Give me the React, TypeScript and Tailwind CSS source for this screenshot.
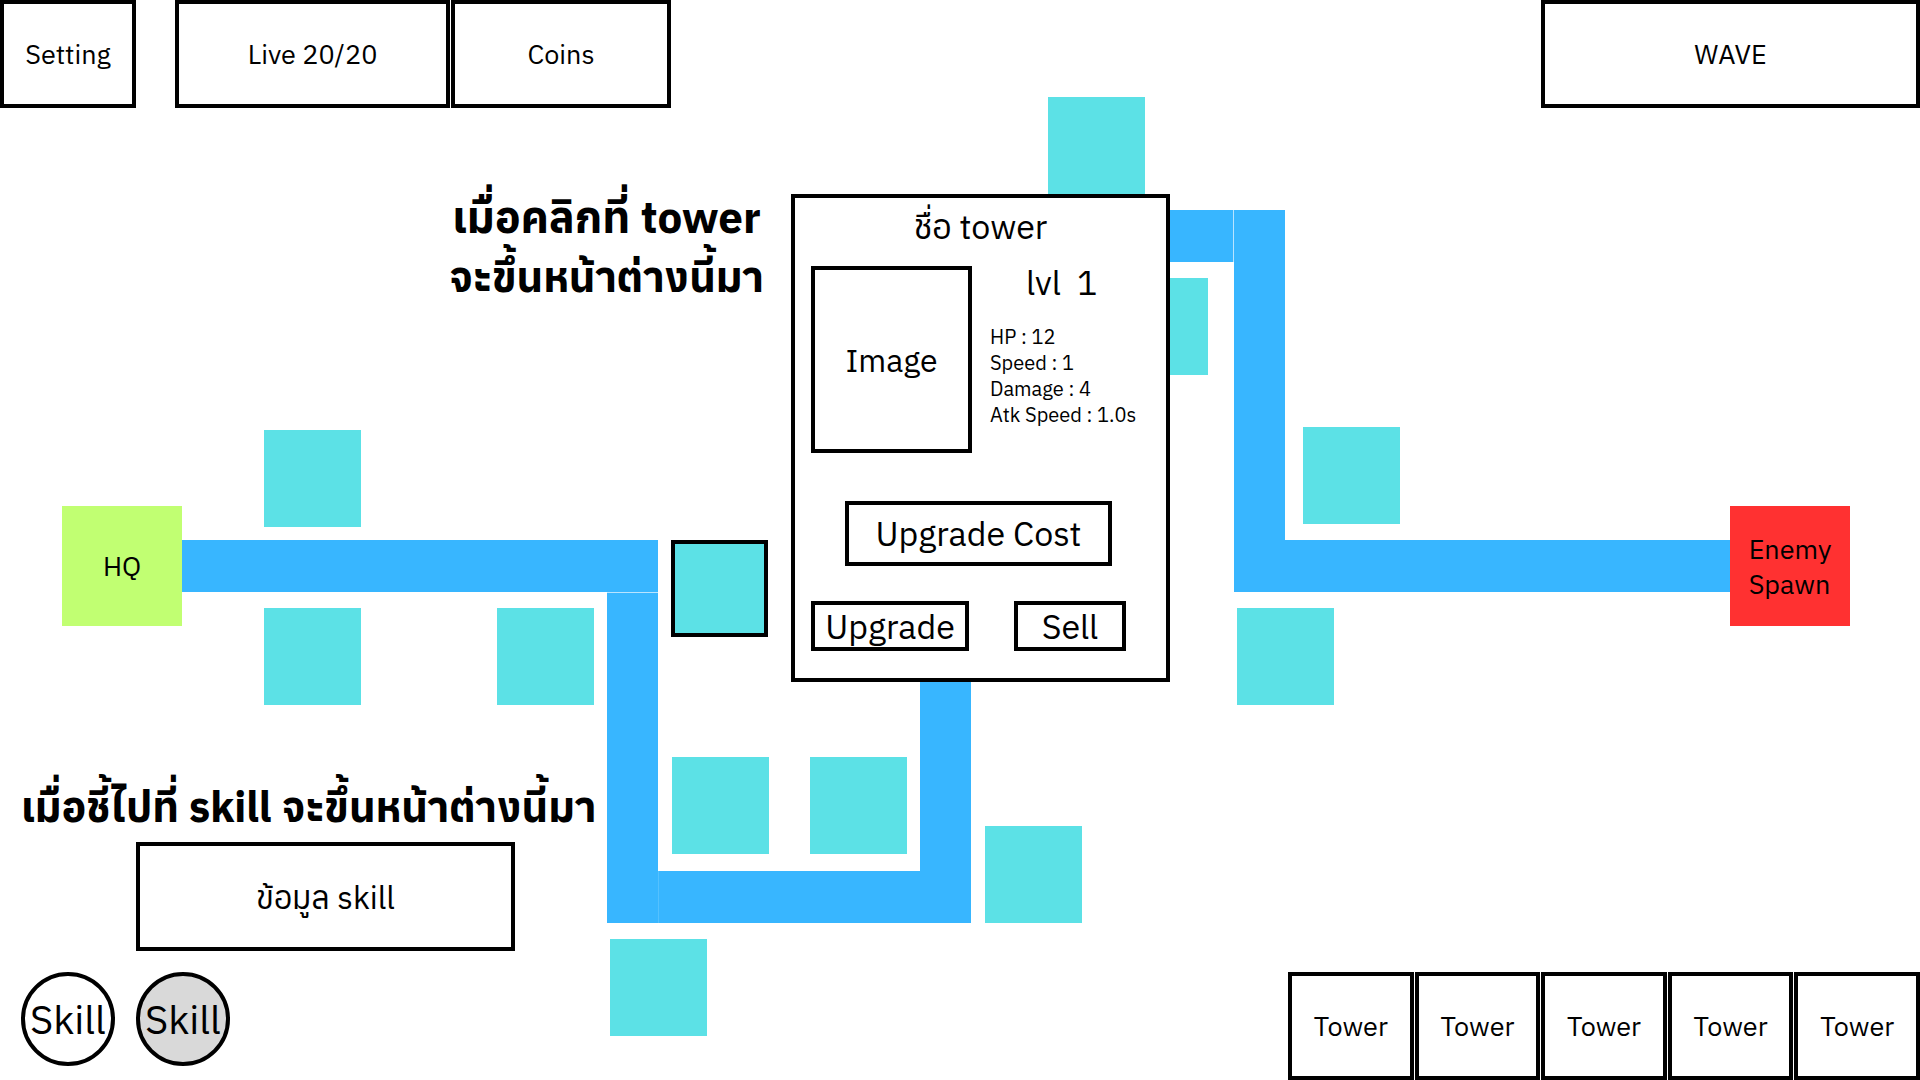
import type { ReactNode } from 'react';

type Place = { left: number; top: number };

const slots: Place[] = [
  { left: 1048, top: 97 },
  { left: 1111, top: 278 },
  { left: 1303, top: 427 },
  { left: 1237, top: 608 },
  { left: 264, top: 430 },
  { left: 264, top: 608 },
  { left: 497, top: 608 },
  { left: 672, top: 757 },
  { left: 810, top: 757 },
  { left: 985, top: 826 },
  { left: 610, top: 939 },
];

const roads = [
  { left: 181, top: 540, width: 477, height: 52 },
  { left: 607, top: 593, width: 51, height: 330 },
  { left: 658, top: 871, width: 313, height: 52 },
  { left: 920, top: 660, width: 51, height: 263 },
  { left: 1150, top: 210, width: 83, height: 52 },
  { left: 1234, top: 210, width: 51, height: 382 },
  { left: 1234, top: 540, width: 496, height: 52 },
];

const stats = ['HP : 12', 'Speed : 1', 'Damage : 4', 'Atk Speed : 1.0s'];

function Board({ children }: { children: ReactNode }) {
  return (
    <section aria-label="Map" className="absolute inset-0">
      {roads.map((road) => (
        <div key={`${road.left}-${road.top}-${road.width}`} className="absolute bg-[#38b6ff]" style={road} />
      ))}
      <div className="absolute top-[592px] left-[607px] h-px w-[51px] bg-[#b9e4ff]" />
      <div className="absolute top-[210px] left-[1233px] h-[52px] w-px bg-[#b9e4ff]" />
      <div className="absolute top-[871px] left-[658px] h-[52px] w-px bg-[#54c1ff]" />
      {slots.map((slot) => (
        <button
          key={`${slot.left}-${slot.top}`}
          aria-label="Tower slot"
          className="absolute size-[97px] bg-[#5ce1e6]"
          style={slot}
        />
      ))}
      <button
        aria-label="Selected tower"
        className="absolute top-[540px] left-[671px] size-[97px] border-4 border-black bg-[#5ce1e6]"
      />
      <div className="absolute top-[506px] left-[62px] flex size-[120px] items-center justify-center bg-[#c1ff72]">
        HQ
      </div>
      <div className="absolute top-[506px] left-[1730px] flex size-[120px] items-center justify-center bg-[#ff3131] leading-[35px]">
        <p>
          Enemy
          <br />
          Spawn
        </p>
      </div>
      {children}
    </section>
  );
}

function TowerPanel() {
  return (
    <div
      role="dialog"
      aria-labelledby="tower-name"
      className="absolute top-[194px] left-[791px] w-[379px] border-4 border-black bg-white px-4 pb-[27px] text-[34px]"
    >
      <h2 id="tower-name" className="pb-1 text-center leading-[56px]">
        ชื่อ tower
      </h2>
      <div className="mt-2 flex gap-[18px]">
        <div className="flex h-[187px] w-[161px] shrink-0 items-center justify-center border-4 border-black text-[32px]">
          Image
        </div>
        <div>
          <p className="pl-9 leading-8 whitespace-pre">lvl  1</p>
          <ul className="mt-[26px] text-[20px] leading-[26px] whitespace-nowrap">
            {stats.map((stat) => (
              <li key={stat}>{stat}</li>
            ))}
          </ul>
        </div>
      </div>
      <div className="mt-12 ml-[34px] flex h-[65px] w-[267px] items-center justify-center border-4 border-black">
        Upgrade Cost
      </div>
      <div className="mt-[35px] flex justify-between pr-6">
        <button className="flex h-[50px] w-[158px] items-center justify-center border-4 border-black">Upgrade</button>
        <button className="flex h-[50px] w-[112px] items-center justify-center border-4 border-black">Sell</button>
      </div>
    </div>
  );
}

export default function App() {
  return (
    <main className="relative flex min-h-screen flex-col justify-between overflow-hidden bg-white font-['Anuphan','IBM_Plex_Sans_Thai','Open_Sans',sans-serif] text-[27px] text-black">
      <Board>
        <p className="absolute top-[187px] left-[449px] text-center text-[42px] leading-[59px] font-bold whitespace-nowrap">
          <span className="text-[44px]">เมื่อคลิกที่ tower</span>
          <br />
          จะขึ้นหน้าต่างนี้มา
        </p>
        <TowerPanel />
      </Board>

      <header className="relative flex h-[108px]">
        <button className="w-[136px] border-4 border-black bg-white">Setting</button>
        <div className="ml-[39px] flex w-[275px] items-center justify-center border-4 border-black bg-white">
          Live 20/20
        </div>
        <div className="ml-px flex w-[220px] items-center justify-center border-4 border-black bg-white">Coins</div>
        <div className="ml-auto flex w-[379px] items-center justify-center border-4 border-black bg-white">WAVE</div>
      </header>

      <footer className="relative flex items-end justify-between">
        <div className="pb-[14px] pl-[21px]">
          <p className="text-[42px] leading-[59px] font-bold whitespace-nowrap">
            เมื่อชี้ไปที่ skill จะขึ้นหน้าต่างนี้มา
          </p>
          <div
            role="tooltip"
            className="mt-[6px] ml-[115px] flex h-[109px] w-[379px] items-center justify-center border-4 border-black bg-white text-[32px]"
          >
            ข้อมูล skill
          </div>
          <div className="mt-[21px] flex gap-[21px] text-[40px]">
            <button className="flex size-[94px] items-center justify-center rounded-full border-4 border-black bg-white">
              Skill
            </button>
            <button className="flex size-[94px] items-center justify-center rounded-full border-4 border-black bg-[#d9d9d9]">
              Skill
            </button>
          </div>
        </div>
        <div className="grid h-[108px] w-[632px] grid-cols-5 gap-px">
          {[1, 2, 3, 4, 5].map((n) => (
            <button key={n} className="border-4 border-black bg-white">
              Tower
            </button>
          ))}
        </div>
      </footer>
    </main>
  );
}
